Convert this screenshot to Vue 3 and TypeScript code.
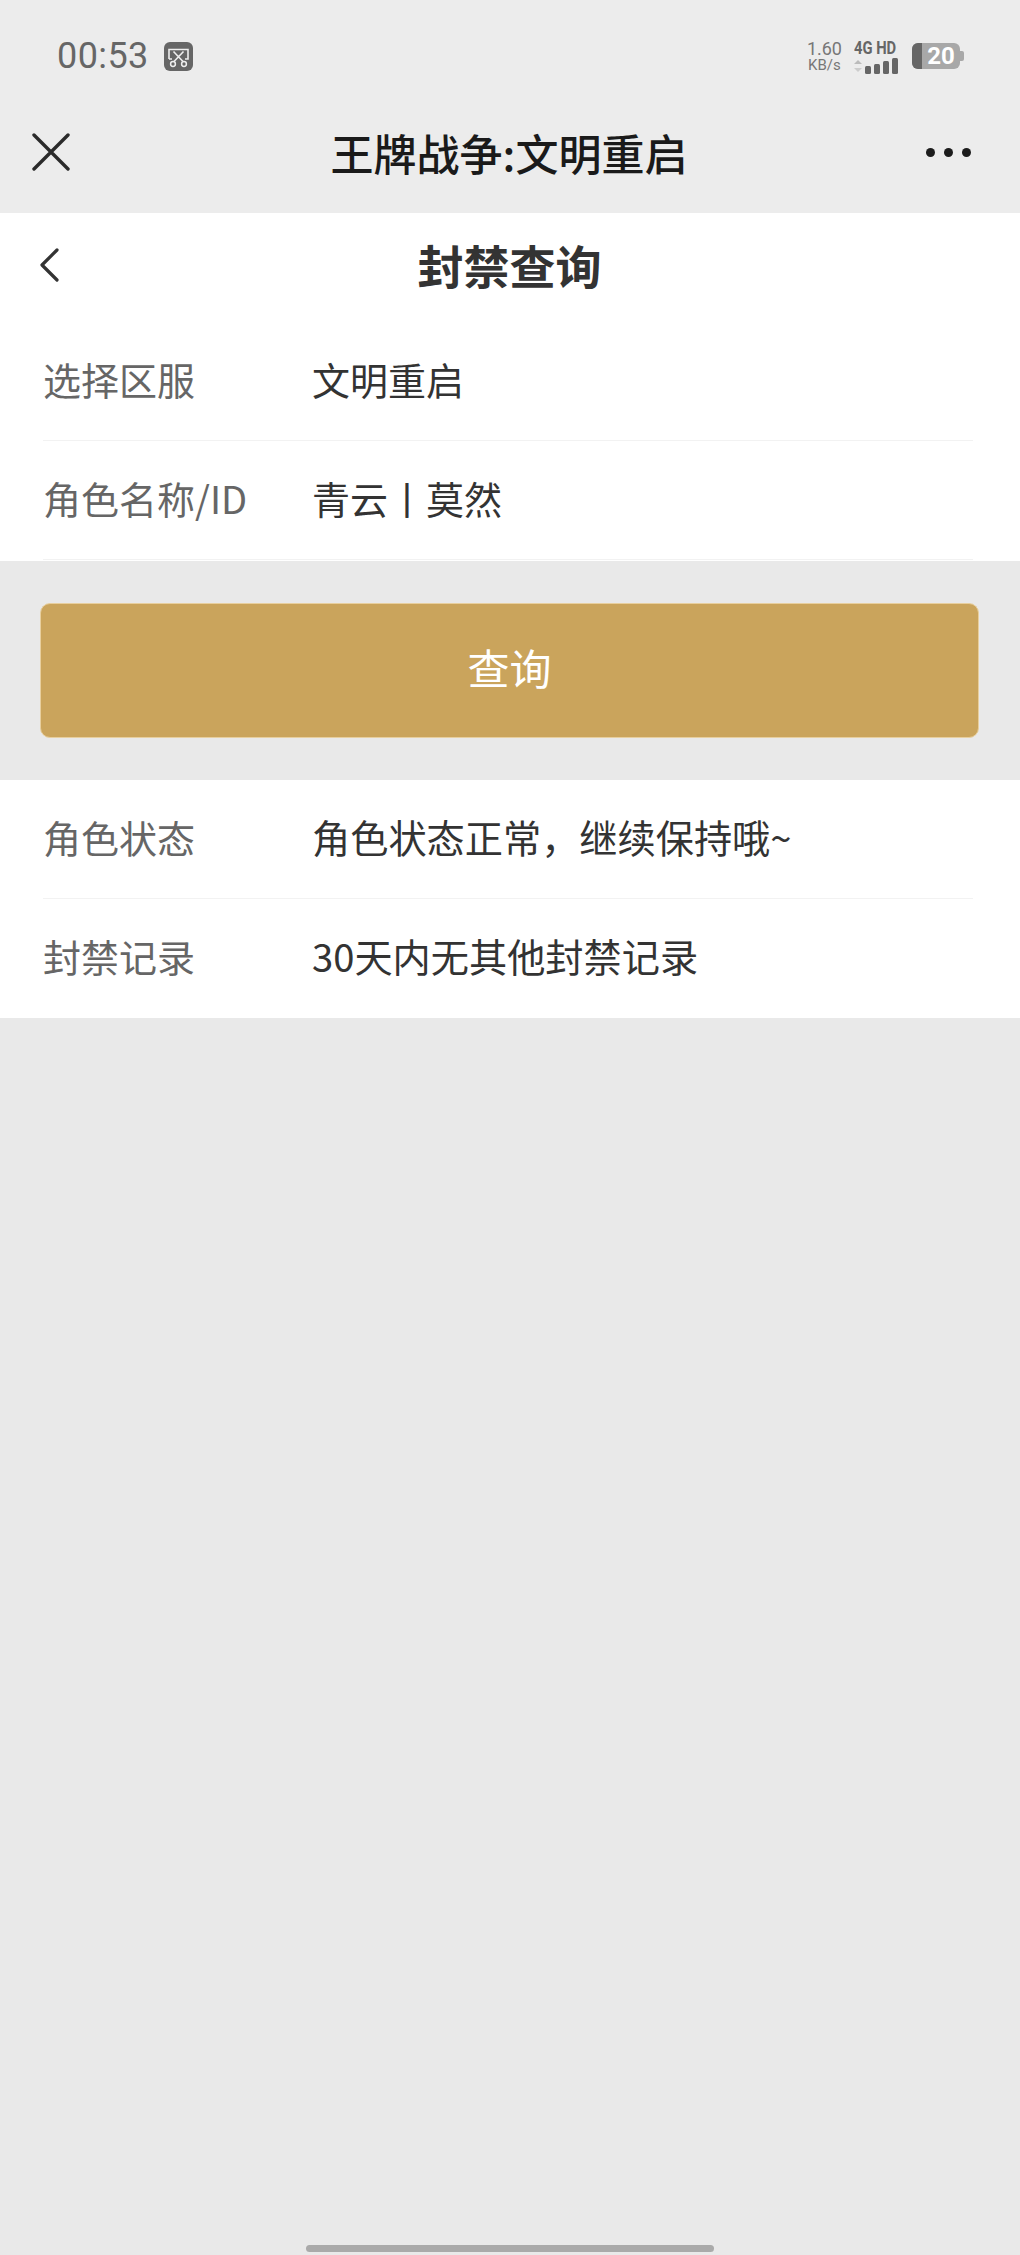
<script setup lang="ts">
interface Row { label: string; value: string }
const formRows: Row[] = [
  { label: '选择区服', value: '文明重启' },
  { label: '角色名称/ID', value: '青云丨莫然' },
]
const resultRows: Row[] = [
  { label: '角色状态', value: '角色状态正常，继续保持哦~' },
  { label: '封禁记录', value: '30天内无其他封禁记录' },
]
</script>

<template>
  <div class="page">
    <header class="wx-head">
      <div class="status">
        <div class="status-left">
          <span class="time">00:53</span>
          <svg class="cut" viewBox="0 0 29 29" width="29" height="29">
            <rect width="29" height="29" rx="6" fill="#666" />
            <path d="M5 17V7.5h19V17h-3M8 17H5M9.5 9.5l9.5 10M19.5 9.5l-9.5 10" fill="none" stroke="#eee" stroke-width="1.6" />
            <circle cx="9" cy="22" r="2.4" fill="none" stroke="#eee" stroke-width="1.5" />
            <circle cx="20" cy="22" r="2.4" fill="none" stroke="#eee" stroke-width="1.5" />
          </svg>
        </div>
        <div class="status-right">
          <div class="speed"><span class="speed-num">1.60</span><span class="speed-unit">KB/s</span></div>
          <div class="net">
            <span class="net-text">4G HD</span>
            <svg viewBox="0 0 46 16" width="46" height="16">
              <path d="M0 6l4-4 4 4z" fill="#bbb" />
              <path d="M0 10l4 4 4-4z" fill="#ccc" />
              <rect x="11" y="8" width="6" height="8" rx="1.5" fill="#666" />
              <rect x="20" y="6" width="6" height="10" rx="1.5" fill="#666" />
              <rect x="29" y="3" width="6" height="13" rx="1.5" fill="#666" />
              <rect x="38" y="0" width="6" height="16" rx="1.5" fill="#666" />
            </svg>
          </div>
          <div class="battery">
            <span class="bat-fill"></span>
            <span class="bat-num">20</span>
            <span class="bat-cap"></span>
          </div>
        </div>
      </div>
      <div class="wx-nav">
        <svg class="close" viewBox="0 0 38 38" width="38" height="38">
          <path d="M2 2l34 34M36 2L2 36" stroke="#2a2a2a" stroke-width="3.4" stroke-linecap="round" />
        </svg>
        <h1 class="wx-title">王牌战争:文明重启</h1>
        <div class="dots"><i></i><i></i><i></i></div>
      </div>
    </header>

    <section class="form">
      <div class="sub-nav">
        <svg class="back" viewBox="0 0 20 34" width="20" height="34">
          <path d="M18 2L3 17l15 15" fill="none" stroke="#333" stroke-width="3.2" stroke-linecap="round" stroke-linejoin="round" />
        </svg>
        <h2 class="sub-title">封禁查询</h2>
      </div>
      <div v-for="r in formRows" :key="r.label" class="row">
        <span class="label">{{ r.label }}</span>
        <span class="value">{{ r.value }}</span>
      </div>
    </section>

    <div class="btn-wrap">
      <button class="query" type="button">查询</button>
    </div>

    <section class="result">
      <div v-for="r in resultRows" :key="r.label" class="row">
        <span class="label">{{ r.label }}</span>
        <span class="value">{{ r.value }}</span>
      </div>
    </section>

    <div class="spacer"></div>
    <div class="home-bar"></div>
  </div>
</template>

<style>
html, body { margin: 0; background: #e9e9e9; }
</style>

<style scoped>
.page {
  width: 1020px;
  height: 2255px;
  display: flex;
  flex-direction: column;
  background: #e9e9e9;
  font-family: "Noto Sans CJK SC", "Liberation Sans", sans-serif;
  overflow: hidden;
}
.wx-head { height: 213px; background: #ececec; flex: none; }
.status {
  height: 112px;
  padding: 0 58px 0 57px;
  display: flex;
  justify-content: space-between;
  align-items: center;
  box-sizing: border-box;
}
.status-left { display: flex; align-items: center; gap: 15px; }
.time { font: 36px/40px Roboto, "Liberation Sans", sans-serif; color: #666; letter-spacing: .4px; }
.cut { display: block; }
.status-right { display: flex; align-items: center; gap: 12px; }
.speed { display: flex; flex-direction: column; align-items: center; color: #777; font-family: Roboto, sans-serif; }
.speed-num { font-size: 18px; line-height: 18px; }
.speed-unit { font-size: 15px; line-height: 15px; }
.net { display: flex; flex-direction: column; gap: 2px; width: 46px; }
.net svg { display: block; }
.net-text { font: 700 18px/17px Roboto, sans-serif; color: #666; white-space: nowrap; transform: scaleX(.82); transform-origin: left; }
.battery {
  position: relative;
  width: 48px;
  height: 26px;
  border-radius: 6px;
  background: #a8a8a8;
  margin-right: 2px;
}
.bat-fill { position: absolute; left: 0; top: 0; bottom: 0; width: 10px; background: #666; border-radius: 6px 0 0 6px; }
.bat-num { position: absolute; left: 10px; right: 0; top: 0; text-align: center; font: 700 24px/26px Roboto, sans-serif; color: #fff; }
.bat-cap { position: absolute; right: -4px; top: 8px; width: 4px; height: 10px; border-radius: 0 2px 2px 0; background: #a8a8a8; }
.wx-nav {
  height: 80px;
  padding: 0 49px 0 32px;
  display: flex;
  align-items: center;
  justify-content: space-between;
}
.close { display: block; }
.wx-title { margin: 0; font-size: 43px; line-height: 60px; font-weight: 500; color: #1a1a1a; white-space: nowrap; transform: translateX(11px); }
.dots { display: flex; gap: 9px; }
.dots i { width: 9px; height: 9px; border-radius: 50%; background: #1c1c1c; display: block; }
.form { background: #fff; height: 348px; flex: none; box-sizing: border-box; }
.sub-nav {
  height: 109px;
  padding: 0 0 0 39px;
  display: flex;
  align-items: center;
  box-sizing: border-box;
  justify-content: flex-start;
}
.back { display: block; transform: translateY(-3px); }
.sub-title {
  margin: 0 auto;
  transform: translateX(-30px) translateY(-4px);
  font-size: 46px;
  line-height: 60px;
  font-weight: 700;
  color: #333;
}
.row {
  height: 119px;
  margin: 0 47px 0 43px;
  padding-bottom: 5px;
  display: flex;
  align-items: center;
  border-bottom: 1px solid #f2f2f2;
  box-sizing: border-box;
}
.label { width: 269px; flex: none; font-size: 38px; line-height: 50px; color: #666; white-space: nowrap; }
.value { font-size: 38px; line-height: 50px; color: #333; white-space: nowrap; }
.result .value { font-size: 38.2px; }
.btn-wrap { padding: 42px 41px 42px 40px; flex: none; }
.query {
  display: block;
  width: 100%;
  height: 135px;
  border: 1px solid #e8cf9e;
  border-radius: 10px;
  background: #caa45c;
  color: #fff;
  font-family: inherit;
  font-size: 42px;
  padding: 0 0 8px;
  box-sizing: border-box;
}
.result { background: #fff; height: 238px; flex: none; }
.result .row:last-child { border-bottom: 0; }
.spacer { flex: 1; }
.home-bar { width: 408px; height: 7px; margin: 0 auto 3px; border-radius: 4px; background: #aaa; flex: none; }
</style>
